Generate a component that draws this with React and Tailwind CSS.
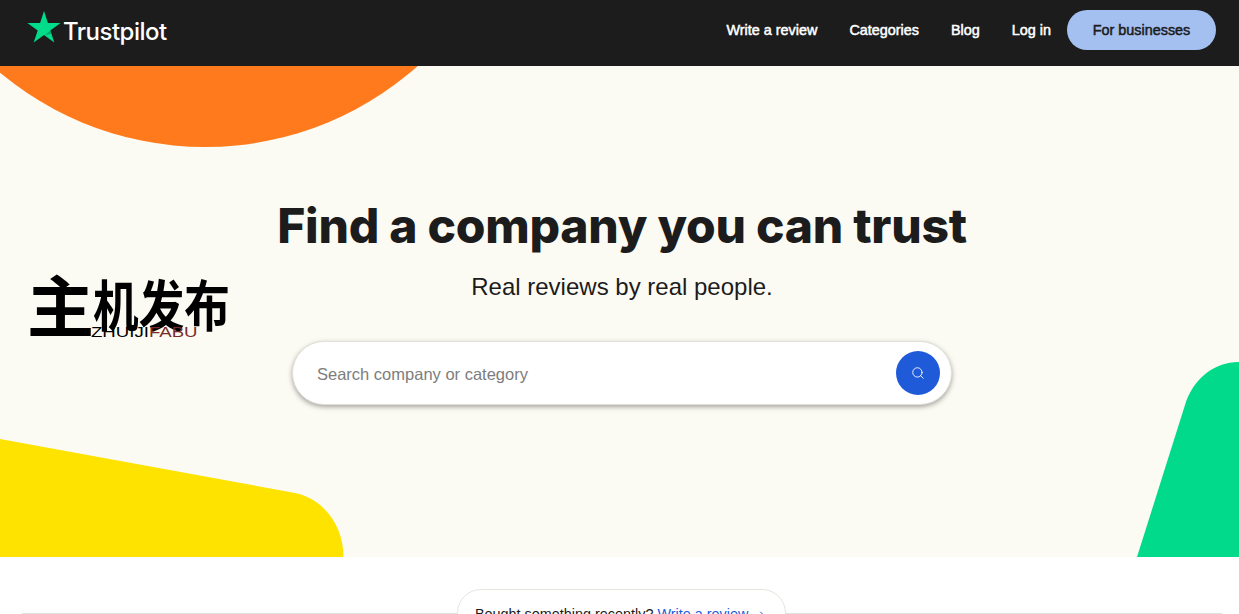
import React from 'react';
import { Search, ChevronRight } from 'lucide-react';

const sans = "font-['Liberation_Sans',Arial,sans-serif]";

function Star() {
  return (
    <svg width="34" height="32" viewBox="0 0 34 32" className="shrink-0">
      <polygon
        points="17,0 20.9,12 33.6,12 23.3,19.4 27.3,31.5 17,24 6.7,31.5 10.7,19.4 0.4,12 13.1,12"
        fill="#00dc8a"
      />
      <polygon points="23.3,19.4 24.3,22.6 17.5,24.4" fill="#00a86b" />
    </svg>
  );
}

function Nav() {
  return (
    <header className="flex h-[66px] items-center justify-between bg-[#1c1c1c] pr-[23px] pb-[6px] pl-[27px]">
      <div className="flex items-start gap-[2px] pb-[2px]">
        <Star />
        <span className="mt-[6px] font-['Inter',sans-serif] text-[24px] leading-[30px] font-medium tracking-[-0.5px] text-white">
          Trustpilot
        </span>
      </div>
      <nav className={`flex items-center text-[14.4px] font-normal text-white [-webkit-text-stroke:0.5px_currentColor] ${sans}`}>
        <a className="mt-[2px] mr-8">Write a review</a>
        <a className="mt-[2px] mr-8">Categories</a>
        <a className="mt-[2px] mr-8">Blog</a>
        <a className="mt-[2px] mr-4">Log in</a>
        <a className="flex h-10 w-[149px] items-center justify-center rounded-full bg-[#a4c0f0] pt-[2px] text-[#1c1c1c]">
          For businesses
        </a>
      </nav>
    </header>
  );
}

function Hero() {
  return (
    <section className="relative flex h-[491px] flex-col items-center overflow-hidden bg-[#fcfbf3] pt-[127px] pl-[5px]">
      {/* background shapes */}
      <svg className="absolute top-0 left-0" width="1239" height="491" viewBox="0 0 1239 491">
        <circle cx="205" cy="-239" r="320" fill="#ff7a1c" />
        <path d="M0 373 L295 427 C324 433 343.5 460 343.5 491 L0 491 Z" fill="#ffe300" />
        <path d="M1137 491 L1185 339 C1193 313 1214 296 1239 296 L1239 491 Z" fill="#00da8a" />
      </svg>

      {/* watermark logo */}
      <div className="absolute top-[212px] left-[30px] h-[75px] w-[202px] font-['Noto_Sans_CJK_SC',sans-serif] text-black">
        <span className="absolute top-[-20px] left-[-3px] text-[67px] leading-[90px] font-bold">主</span>
        <span className="absolute top-[-11px] left-[63px] origin-left scale-x-[0.83] text-[55px] leading-[70px] font-bold whitespace-nowrap">机发布</span>
        <span className={`absolute top-[47px] left-[61px] origin-left scale-x-[1.33] text-[14px] leading-[14px] whitespace-nowrap ${sans}`}>
          ZHUIJI<span className="text-[#7a2a2a]">FABU</span>
        </span>
      </div>

      <h1 className="relative font-['Inter',sans-serif] text-[48px] leading-[66px] font-extrabold tracking-[-0.25px] text-[#1c1c1c]">
        Find a company you can trust
      </h1>
      <p className={`relative mt-[12px] text-[24px] leading-8 text-[#1c1c1c] ${sans}`}>
        Real reviews by real people.
      </p>
      <div className="relative mt-[38px] flex h-16 w-[660px] items-center justify-between rounded-full border border-[#e2e1d8] bg-white pr-[11px] pl-6 shadow-[0_2px_5px_rgba(0,0,0,0.35)]">
        <span className={`pt-[2px] text-[16.5px] text-[#7d7d7d] ${sans}`}>Search company or category</span>
        <button className="flex h-11 w-11 items-center justify-center rounded-full bg-[#1f5bd8]">
          <Search size={14} strokeWidth={1.5} color="#fff" />
        </button>
      </div>
    </section>
  );
}

export default function App() {
  return (
    <div className={`h-screen overflow-hidden bg-white ${sans}`}>
      <Nav />
      <Hero />
      <div className="relative mt-[32px] mr-[17px] ml-[22px]">
        <div className="absolute top-[24px] right-0 left-0 border-t border-[#e0e0e0]" />
        <div className="relative ml-[435px] flex h-12 w-[329px] items-center gap-1 rounded-3xl border border-[#e5e5dd] bg-white pt-[3px] pl-[17px] text-[14.4px] text-[#1c1c1c]">
          <span>Bought something recently?</span>
          <a className="text-[#1f5bd8]">Write a review</a>
          <ChevronRight size={12} className="ml-1" color="#1f5bd8" />
        </div>
      </div>
    </div>
  );
}
